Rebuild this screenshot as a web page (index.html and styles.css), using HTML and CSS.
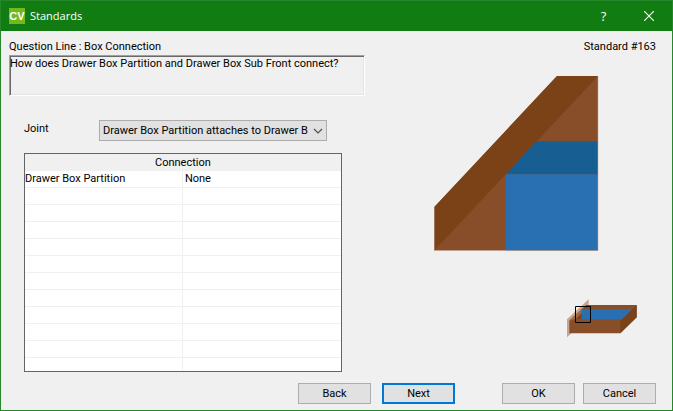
FILE: index.html
```html
<!DOCTYPE html>
<html lang="en">
<head>
<meta charset="utf-8">
<title>Standards</title>
<link rel="stylesheet" href="styles.css">
</head>
<body>
<div class="window">
  <header class="titlebar">
    <span class="app-icon">CV</span>
    <h1 class="title">Standards</h1>
    <button class="caption-button" type="button" aria-label="Help">?</button>
    <button class="caption-button" type="button" aria-label="Close">
      <svg width="10" height="10" viewBox="0 0 10 10"><path d="M0 0L10 10M10 0L0 10" stroke="#fff" stroke-width="1.1" fill="none"/></svg>
    </button>
  </header>

  <main class="content">
    <div class="heading">
      <label for="question">Question Line : Box Connection</label>
      <span>Standard #163</span>
    </div>

    <div class="columns">
      <section class="form">
        <textarea class="question" id="question" readonly>How does Drawer Box Partition and Drawer Box Sub Front connect?</textarea>
        <div class="field">
          <label class="field-label" for="joint">Joint</label>
          <div class="combo">
            <select class="select" id="joint">
              <option>Drawer Box Partition attaches to Drawer B</option>
            </select>
            <svg class="chevron" width="10" height="6" viewBox="0 0 10 6"><path d="M1 1L5 5L9 1" stroke="#505050" stroke-width="1.2" fill="none"/></svg>
          </div>
        </div>
        <div class="list">
          <table class="grid">
            <thead><tr><th colspan="2">Connection</th></tr></thead>
            <tbody>
              <tr><td>Drawer Box Partition</td><td>None</td></tr>
              <tr><td></td><td></td></tr>
              <tr><td></td><td></td></tr>
              <tr><td></td><td></td></tr>
              <tr><td></td><td></td></tr>
              <tr><td></td><td></td></tr>
              <tr><td></td><td></td></tr>
              <tr><td></td><td></td></tr>
              <tr><td></td><td></td></tr>
              <tr><td></td><td></td></tr>
              <tr><td></td><td></td></tr>
              <tr><td></td><td></td></tr>
            </tbody>
          </table>
        </div>
      </section>

      <section class="preview">
        <svg class="joint-view" width="165" height="175" viewBox="0 0 165 175">
          <path d="M123 0H164V174.600H0.300V131Z" fill="#884e29"/>
          <path d="M123 0H164L0.300 174.600V131Z" fill="#7b4217"/>
          <path d="M102.500 65.300H164V98.300H71.700Z" fill="#175f93"/>
          <path d="M71.700 98.300H164V174.600H71.700Z" fill="#2970b3"/>
          <path d="M164 0V174.600H0.300V131" fill="none" stroke="#c4a896" stroke-width="0.500"/>
        </svg>
        <svg class="box-view" width="74" height="42" viewBox="0 0 74 42">
          <path d="M2 22.300L23.700 2.300V20L2 40.300Z" fill="#c9a48f"/>
          <path d="M21 8H71.700V20.300L55.300 36.200H4.300V23.700Z" fill="#884e29"/>
          <path d="M16.700 12.200H67L57 22.300H16.700Z" fill="#2970b3"/>
          <path d="M4.300 23.700L16.700 12V22.300H10Z" fill="#9c6a4c"/>
          <path d="M10.700 22.300L16.700 16V22.300Z" fill="#7b4217"/>
          <path d="M71.700 8.300V20.300L55.300 36.200V23.700Z" fill="#7b4217"/>
          <path d="M10.500 9.500H25.500V25.500H10.500Z" fill="none" stroke="#000"/>
        </svg>
      </section>
    </div>

    <footer class="actions">
      <button class="button" type="button">Back</button>
      <button class="button button-default" type="button">Next</button>
      <button class="button button-ok" type="button">OK</button>
      <button class="button button-cancel" type="button">Cancel</button>
    </footer>
  </main>
</div>
</body>
</html>
```
FILE: styles.css
```css
* {
  box-sizing: border-box;
}

body {
  margin: 0;
  font: 11px/16px Tahoma, Roboto, sans-serif;
  color: #000;
  background: #f0f0f0;
}

button,
select,
textarea {
  font: inherit;
  color: inherit;
  margin: 0;
  border-radius: 0;
}

.window {
  display: flex;
  flex-direction: column;
  min-height: 100vh;
  border: 1px solid #25872a;
  background: #f0f0f0;
}

.titlebar {
  display: flex;
  align-items: center;
  height: 30px;
  padding-left: 8px;
  background: #117c11;
  color: #fff;
}

.app-icon {
  width: 16px;
  height: 16px;
  background: #73b91e;
  font: bold 11px/16px "Liberation Sans", sans-serif;
  text-align: center;
}

.title {
  flex: 1;
  margin: 0 0 0 5px;
  font: 11px/16px "Segoe UI", "Open Sans", sans-serif;
}

.caption-button {
  display: flex;
  align-items: center;
  justify-content: center;
  width: 45px;
  height: 30px;
  padding: 0;
  border: 0;
  background: none;
  color: #fff;
  font: 13px/16px "Segoe UI", "Open Sans", sans-serif;
}

.caption-button:last-child {
  margin-right: 1px;
}

.content {
  flex: 1;
  display: flex;
  flex-direction: column;
  padding: 8px 16px 6px 8px;
}

.heading {
  display: flex;
  justify-content: space-between;
  height: 16px;
}

.columns {
  flex: 1;
  display: grid;
  grid-template-columns: 11fr 9fr;
}

.form {
  display: flex;
  flex-direction: column;
}

.question {
  width: 100%;
  height: 41px;
  padding: 0;
  border: 1px solid;
  border-color: #a0a0a0 #fff #fff #a0a0a0;
  box-shadow: inset 1px 1px #696969, inset -1px -1px #e3e3e3;
  background: transparent;
  resize: none;
  outline: none;
}

.field {
  display: flex;
  margin: 24px 38px 12px 15px;
}

.field-label {
  width: 75px;
  padding-top: 1px;
}

.combo {
  flex: 1;
  display: grid;
  align-items: center;
  justify-items: end;
}

.select {
  grid-area: 1 / 1;
  width: 100%;
  height: 21px;
  padding: 0 14px 0 3px;
  border: 1px solid #adadad;
  background: #e1e1e1;
  appearance: none;
}

.chevron {
  grid-area: 1 / 1;
  margin-right: 4px;
  pointer-events: none;
}

.list {
  height: 219px;
  margin: 0 23px 0 15px;
  border: 1px solid #646464;
  background: #fff;
  overflow: hidden;
}

.grid {
  width: 100%;
  table-layout: fixed;
  border-spacing: 0;
}

.grid th {
  height: 17px;
  padding: 0;
  background: #f0f0f0;
  font-weight: normal;
}

.grid td {
  height: 17px;
  padding: 0 0 0 2px;
  border-bottom: 1px solid #f0f0f0;
}

.grid td:first-child {
  padding: 0;
  border-right: 1px solid #f0f0f0;
}

.preview {
  display: flex;
  flex-direction: column;
  align-items: flex-end;
}

.joint-view {
  margin: 21px 57px 0 0;
}

.box-view {
  margin: 46px 17px 0 0;
}

.actions {
  display: flex;
  justify-content: flex-end;
  padding-top: 11px;
}

.button {
  width: 73px;
  height: 21px;
  padding: 0;
  border: 1px solid #adadad;
  background: #e1e1e1;
}

.button-default {
  margin-left: 11px;
  border: 2px solid #0078d7;
}

.button-ok {
  margin-left: 47px;
}

.button-cancel {
  margin-left: 8px;
}
```
